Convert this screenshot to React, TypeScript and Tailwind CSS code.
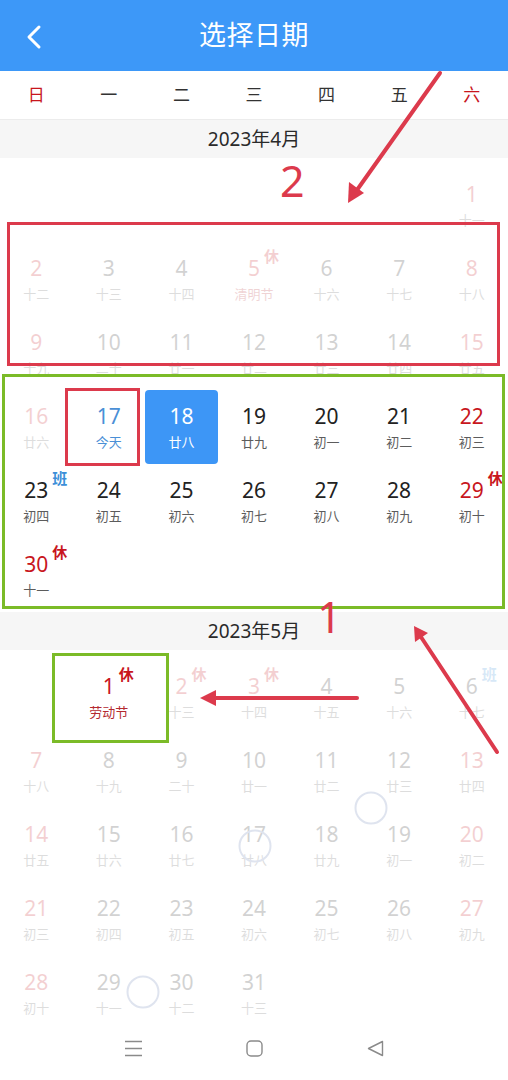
import React from "react";

type Cell = {
  d?: number;
  l?: string;
  red?: boolean;
  lunarRed?: boolean;
  badge?: "休" | "班";
  today?: boolean;
  sel?: boolean;
  faded?: boolean;
};

const E: Cell = {};

function mk(d: number, l: string, o: Partial<Cell> = {}): Cell {
  return { d, l, ...o };
}

const april: Cell[][] = [
  [E, E, E, E, E, E, mk(1, "十一", { red: true, faded: true })],
  [
    mk(2, "十二", { red: true, faded: true }),
    mk(3, "十三", { faded: true }),
    mk(4, "十四", { faded: true }),
    mk(5, "清明节", { red: true, lunarRed: true, badge: "休", faded: true }),
    mk(6, "十六", { faded: true }),
    mk(7, "十七", { faded: true }),
    mk(8, "十八", { red: true, faded: true }),
  ],
  [
    mk(9, "十九", { red: true, faded: true }),
    mk(10, "二十", { faded: true }),
    mk(11, "廿一", { faded: true }),
    mk(12, "廿二", { faded: true }),
    mk(13, "廿三", { faded: true }),
    mk(14, "廿四", { faded: true }),
    mk(15, "廿五", { red: true, faded: true }),
  ],
  [
    mk(16, "廿六", { red: true, faded: true }),
    mk(17, "今天", { today: true }),
    mk(18, "廿八", { sel: true }),
    mk(19, "廿九"),
    mk(20, "初一"),
    mk(21, "初二"),
    mk(22, "初三", { red: true }),
  ],
  [
    mk(23, "初四", { badge: "班" }),
    mk(24, "初五"),
    mk(25, "初六"),
    mk(26, "初七"),
    mk(27, "初八"),
    mk(28, "初九"),
    mk(29, "初十", { red: true, badge: "休" }),
  ],
  [mk(30, "十一", { red: true, badge: "休" }), E, E, E, E, E, E],
];

const f = { faded: true };
const fr = { faded: true, red: true };

const may: Cell[][] = [
  [
    E,
    mk(1, "劳动节", { red: true, lunarRed: true, badge: "休" }),
    mk(2, "十三", { red: true, badge: "休", faded: true }),
    mk(3, "十四", { red: true, badge: "休", faded: true }),
    mk(4, "十五", f),
    mk(5, "十六", f),
    mk(6, "十七", { badge: "班", faded: true }),
  ],
  [
    mk(7, "十八", fr),
    mk(8, "十九", f),
    mk(9, "二十", f),
    mk(10, "廿一", f),
    mk(11, "廿二", f),
    mk(12, "廿三", f),
    mk(13, "廿四", fr),
  ],
  [
    mk(14, "廿五", fr),
    mk(15, "廿六", f),
    mk(16, "廿七", f),
    mk(17, "廿八", f),
    mk(18, "廿九", f),
    mk(19, "初一", f),
    mk(20, "初二", fr),
  ],
  [
    mk(21, "初三", fr),
    mk(22, "初四", f),
    mk(23, "初五", f),
    mk(24, "初六", f),
    mk(25, "初七", f),
    mk(26, "初八", f),
    mk(27, "初九", fr),
  ],
  [mk(28, "初十", fr), mk(29, "十一", f), mk(30, "十二", f), mk(31, "十三", f), E, E, E],
];

function DayCell({ c }: { c: Cell }) {
  if (c.d === undefined) return <div className="h-[74px]" />;
  const numColor = c.sel
    ? "text-white"
    : c.today
    ? "text-[#4a8fd6]"
    : c.red
    ? "text-[#c8161d]"
    : "text-[#222222]";
  const lunarColor = c.sel
    ? "text-white"
    : c.today
    ? "text-[#4a8fd6]"
    : c.lunarRed
    ? "text-[#b42a30]"
    : "text-[#5c5c5c]";
  return (
    <div
      className={
        "h-[74px] flex flex-col items-center " +
        (c.sel ? "bg-[#3d96f6] rounded-[4px] " : "") +
        (c.faded ? "opacity-[0.2]" : "")
      }
    >
      <span className={"relative mt-[14px] text-[21px] leading-[24px] " + numColor}>
        {c.d}
        {c.badge && (
          <span
            className={
              "absolute left-full top-[-8px] ml-[4px] text-[15px] leading-[16px] font-bold whitespace-nowrap " +
              (c.badge === "休" ? "text-[#c8161d]" : "text-[#3b8fd8]")
            }
          >
            {c.badge}
          </span>
        )}
      </span>
      <span className={"mt-[6px] text-[13px] leading-[16px] whitespace-nowrap " + lunarColor}>{c.l}</span>
    </div>
  );
}

function Month({ title, rows }: { title: string; rows: Cell[][] }) {
  return (
    <div>
      <div className="h-[38px] bg-[#f6f6f6] flex items-center justify-center text-[19px] text-[#2a2a2a]">
        {title}
      </div>
      <div className="pt-[10px] grid grid-cols-7">
        {rows.flat().map((c, i) => (
          <DayCell key={i} c={c} />
        ))}
      </div>
    </div>
  );
}

const weekdays = ["日", "一", "二", "三", "四", "五", "六"];

export default function App() {
  return (
    <div
      className="relative w-[508px] h-[1080px] overflow-hidden bg-white"
      style={{ fontFamily: '"Noto Sans", "Noto Sans CJK SC", sans-serif' }}
    >
      {/* Header */}
      <div className="relative h-[71px] bg-[#3d98f8] flex items-center justify-center">
        <svg className="absolute left-[24px] top-[24px]" width="20" height="26" viewBox="0 0 20 26">
          <path d="M15 3 L5 13 L15 23" fill="none" stroke="white" strokeWidth="3" strokeLinecap="round" strokeLinejoin="round" />
        </svg>
        <span className="text-white text-[27px] tracking-[0.5px]">选择日期</span>
      </div>

      {/* Weekdays */}
      <div className="h-[49px] grid grid-cols-7 items-center border-b border-[#ececec]">
        {weekdays.map((w, i) => (
          <div
            key={w}
            className={
              "text-center text-[17px] " + (i === 0 || i === 6 ? "text-[#c8161d]" : "text-[#333333]")
            }
          >
            {w}
          </div>
        ))}
      </div>

      <Month title="2023年4月" rows={april} />
      <Month title="2023年5月" rows={may} />

      {/* System nav bar */}
      <div className="h-[50px] flex justify-center items-start pt-[10px] gap-[104px]">
        <svg width="17" height="17" viewBox="0 0 17 17">
          <path d="M0 1.5 H17 M0 8.5 H17 M0 15.5 H17" stroke="#8a8a8a" strokeWidth="1.4" />
        </svg>
        <svg width="17" height="17" viewBox="0 0 17 17">
          <rect x="1" y="1" width="15" height="15" rx="4" fill="none" stroke="#8a8a8a" strokeWidth="1.4" />
        </svg>
        <svg width="17" height="17" viewBox="0 0 17 17">
          <path d="M15.5 1.5 L1.5 8.5 L15.5 15.5 Z" fill="none" stroke="#8a8a8a" strokeWidth="1.4" strokeLinejoin="round" />
        </svg>
      </div>

      {/* Annotations overlay */}
      <div className="absolute left-[7px] top-[222px] w-[493px] h-[144px] border-[3px] border-[#dc3a4c] pointer-events-none" />
      <div className="absolute left-[2px] top-[374px] w-[503px] h-[235px] border-[3.5px] border-[#7bbb28] pointer-events-none" />
      <div className="absolute left-[65px] top-[388px] w-[75px] h-[78px] border-[3px] border-[#dc3a4c] pointer-events-none" />
      <div className="absolute left-[52px] top-[653px] w-[117px] h-[90px] border-[3.5px] border-[#7bbb28] pointer-events-none" />

      <span className="absolute left-[280px] top-[156px] text-[43px] leading-[50px] text-[#dc3a4c]">2</span>
      <span className="absolute left-[317px] top-[592px] text-[43px] leading-[50px] text-[#dc3a4c]">1</span>

      <svg className="absolute left-0 top-0 pointer-events-none" width="508" height="1080" viewBox="0 0 508 1080">
        {/* arrow 1 */}
        <line x1="440" y1="73" x2="357" y2="190" stroke="#dc3a4c" strokeWidth="4" strokeLinecap="round" />
        <polygon points="348,203 349,182 364,193" fill="#dc3a4c" />
        {/* arrow 2 */}
        <line x1="497" y1="752" x2="421" y2="637" stroke="#dc3a4c" strokeWidth="4" strokeLinecap="round" />
        <polygon points="414,626 428,633 415,642" fill="#dc3a4c" />
        {/* arrow 3 */}
        <line x1="357" y1="698" x2="212" y2="698" stroke="#dc3a4c" strokeWidth="4" strokeLinecap="round" />
        <polygon points="200,698 216,690 216,706" fill="#dc3a4c" />
        {/* touch circles */}
        <circle cx="371" cy="808" r="15.5" fill="none" stroke="#dfe4ef" strokeWidth="2" />
        <circle cx="255" cy="846" r="15.5" fill="none" stroke="#dfe4ef" strokeWidth="2" />
        <circle cx="143" cy="992" r="15.5" fill="none" stroke="#dfe4ef" strokeWidth="2" />
      </svg>
    </div>
  );
}
